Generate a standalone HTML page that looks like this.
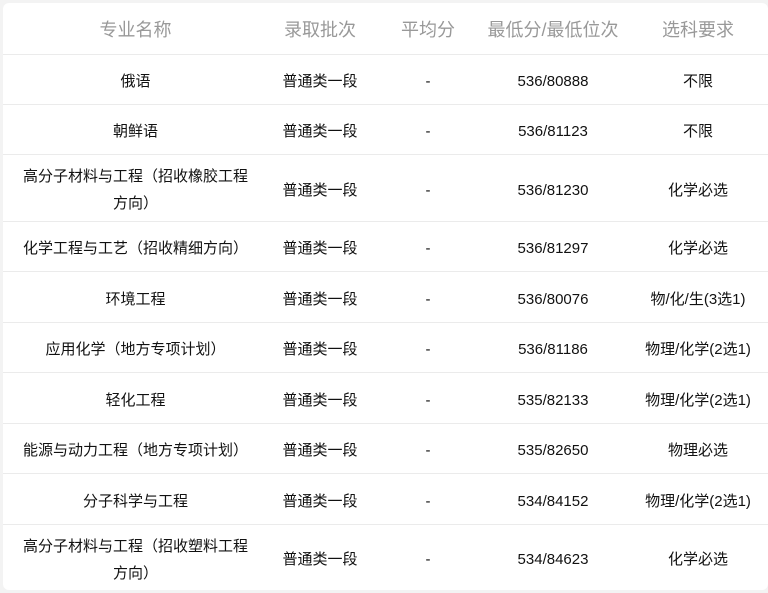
<!DOCTYPE html><html><head><meta charset="utf-8"><style>
body{margin:0;background:#f3f3f3;font-family:"Liberation Sans","Noto Sans CJK SC",sans-serif;}
.card{position:absolute;left:3px;top:3px;width:765px;height:587px;background:#fff;border-radius:6px;overflow:hidden}
.row{position:absolute;left:0;width:765px;border-bottom:1px solid #ebebeb;display:flex;align-items:center}
.row div{position:absolute;text-align:center;font-size:15px;color:#111;line-height:27px;transform:translateY(2px)}
.h div{font-size:18px;color:#999}
.c1{left:0;width:265px}.c2{left:252px;width:130px}.c3{left:375px;width:100px}.c4{left:475px;width:150px}.c5{left:625px;width:140px}
</style></head><body><div class="card">
<div class="row h" style="top:0;height:51px"><div class="c1">专业名称</div><div class="c2">录取批次</div><div class="c3">平均分</div><div class="c4">最低分/最低位次</div><div class="c5">选科要求</div></div>
<div class="row" style="top:52px;height:49px"><div class="c1">俄语</div><div class="c2">普通类一段</div><div class="c3">-</div><div class="c4">536/80888</div><div class="c5">不限</div></div>
<div class="row" style="top:102px;height:49px"><div class="c1">朝鲜语</div><div class="c2">普通类一段</div><div class="c3">-</div><div class="c4">536/81123</div><div class="c5">不限</div></div>
<div class="row" style="top:152px;height:66px"><div class="c1">高分子材料与工程（招收橡胶工程<br>方向）</div><div class="c2">普通类一段</div><div class="c3">-</div><div class="c4">536/81230</div><div class="c5">化学必选</div></div>
<div class="row" style="top:219px;height:49px"><div class="c1">化学工程与工艺（招收精细方向）</div><div class="c2">普通类一段</div><div class="c3">-</div><div class="c4">536/81297</div><div class="c5">化学必选</div></div>
<div class="row" style="top:269px;height:50px"><div class="c1">环境工程</div><div class="c2">普通类一段</div><div class="c3">-</div><div class="c4">536/80076</div><div class="c5">物/化/生(3选1)</div></div>
<div class="row" style="top:320px;height:49px"><div class="c1">应用化学（地方专项计划）</div><div class="c2">普通类一段</div><div class="c3">-</div><div class="c4">536/81186</div><div class="c5">物理/化学(2选1)</div></div>
<div class="row" style="top:370px;height:50px"><div class="c1">轻化工程</div><div class="c2">普通类一段</div><div class="c3">-</div><div class="c4">535/82133</div><div class="c5">物理/化学(2选1)</div></div>
<div class="row" style="top:421px;height:49px"><div class="c1">能源与动力工程（地方专项计划）</div><div class="c2">普通类一段</div><div class="c3">-</div><div class="c4">535/82650</div><div class="c5">物理必选</div></div>
<div class="row" style="top:471px;height:50px"><div class="c1">分子科学与工程</div><div class="c2">普通类一段</div><div class="c3">-</div><div class="c4">534/84152</div><div class="c5">物理/化学(2选1)</div></div>
<div class="row" style="top:522px;height:65px;border:0"><div class="c1">高分子材料与工程（招收塑料工程<br>方向）</div><div class="c2">普通类一段</div><div class="c3">-</div><div class="c4">534/84623</div><div class="c5">化学必选</div></div>
</div></body></html>
